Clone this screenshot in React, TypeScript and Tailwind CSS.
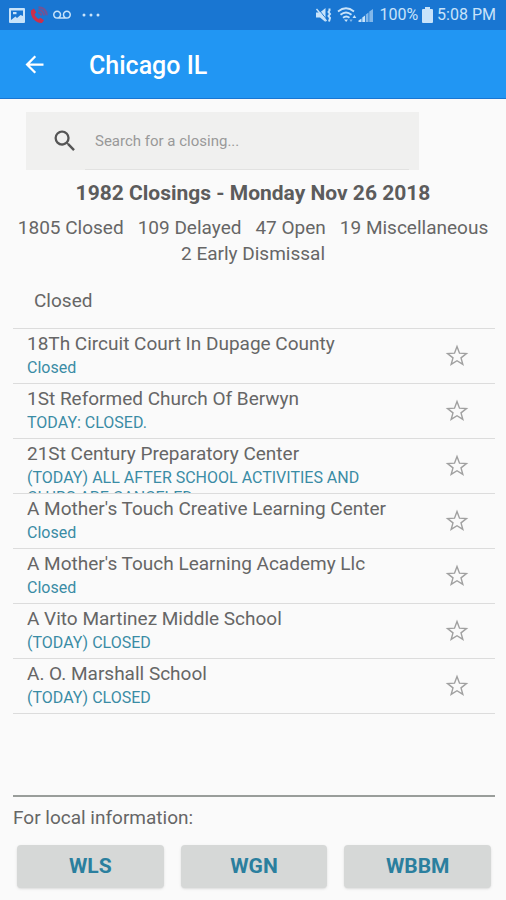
import React, { useState } from "react";
import { MdArrowBack, MdSearch, MdVoicemail } from "react-icons/md";

const closings = [
  { id: 1, name: "18Th Circuit Court In Dupage County", status: "Closed" },
  { id: 2, name: "1St Reformed Church Of Berwyn", status: "TODAY: CLOSED." },
  {
    id: 3,
    name: "21St Century Preparatory Center",
    status: "(TODAY) ALL AFTER SCHOOL ACTIVITIES AND CLUBS ARE CANCELED",
  },
  { id: 4, name: "A Mother's Touch Creative Learning Center", status: "Closed" },
  { id: 5, name: "A Mother's Touch Learning Academy Llc", status: "Closed" },
  { id: 6, name: "A Vito Martinez Middle School", status: "(TODAY) CLOSED" },
  { id: 7, name: "A. O. Marshall School", status: "(TODAY) CLOSED" },
];

const totals = ["1805 Closed", "109 Delayed", "47 Open", "19 Miscellaneous", "2 Early Dismissal"];

const stations = ["WLS", "WGN", "WBBM"];

const Star = () => (
  <svg width="26" height="26" viewBox="0 0 24 24" fill="none" stroke="#a0a0a0" strokeWidth="1.300">
    <path d="M12 3.200l2.300 6.200 6.400.3-5 4 1.700 6.100-5.400-3.400-5.400 3.400 1.700-6.100-5-4 6.400-.3z" />
  </svg>
);

const StatusBar = () => (
  <div className="flex items-center justify-between h-[30px] pl-[9px] pr-[10px] bg-[#1976d2] text-[#c8e3fa]">
    <div className="flex items-center">
      <svg width="16" height="15" viewBox="0 0 16 15">
        <rect width="16" height="15" rx="1" fill="currentColor" />
        <path d="M2 2.500h12v5.500l-2.500-1L8 10 6.500 8.500 2 12z" fill="#1976d2" />
        <path d="M4 4h3.500v2.200H4z" fill="currentColor" />
      </svg>
      <svg className="ml-[5px]" width="18" height="18" viewBox="0 0 18 18" fill="none">
        <path
          d="M1 4.500 4 2.500l2.200 4-1.700 1.800c.8 2 2 3.600 4 4.700l2-1.200 3.500 2.500-2 2.700C6 17.500 0 11.500 1 4.500z"
          fill="#cc2f4b"
        />
        <path
          d="M8 6.500c2 .3 3 1.300 3.300 3M8.500 3.800c3.500.4 5.300 2.300 5.700 5.700M8.500 1.200c5 .4 8 3.200 8.300 8"
          stroke="#6f5496"
          strokeWidth="2"
        />
      </svg>
      <MdVoicemail className="ml-[5px]" size={18} />
      <svg className="ml-[11px]" width="18" height="4" viewBox="0 0 18 4" fill="currentColor">
        <circle cx="2" cy="2" r="1.500" />
        <circle cx="9" cy="2" r="1.500" />
        <circle cx="16" cy="2" r="1.500" />
      </svg>
    </div>

    <div className="flex items-center">
      <svg width="18" height="16" viewBox="0 0 18 16" fill="none">
        <path d="M1 5.500h4L10.500 1v14L5 10.500H1z" fill="currentColor" />
        <path d="M3 1.500l9 11.500" stroke="#1976d2" strokeWidth="1" />
        <path d="M1.500 2l10 12" stroke="currentColor" strokeWidth="1.400" />
        <path d="M14.500 1.500v2L13.500 5l1.500 2-1.500 2 1.500 2-1 3.500" stroke="currentColor" strokeWidth="2" />
      </svg>
      <svg className="ml-1" width="20" height="16" viewBox="0 0 20 16" fill="none" stroke="currentColor">
        <path d="M1 4.500c5-4 11-4 16 0M3.500 7.800c3.500-3 7.500-3 11 0M6 10.800c2-1.600 4.500-1.600 6.500 0" strokeWidth="1.800" />
        <path d="M7 12.500h4L9.200 15z" fill="currentColor" stroke="none" />
        <path d="M12.300 12.500h3.400L14 15z" fill="currentColor" stroke="none" opacity="0.600" />
        <path d="M15.500 11h3.800l-1.900-3z" fill="currentColor" stroke="none" />
      </svg>
      <svg className="ml-px" width="16" height="16" viewBox="0 0 16 16" fill="currentColor">
        <path d="M.5 13.500l3-2V15h-3zM4.300 10.500l2.700-2V15H4.300z" />
        <path d="M7.800 7.500l2.700-2V15H7.800zM11.300 4.500L15 2v13h-3.700z" opacity="0.600" />
      </svg>
      <span className="ml-[5px] text-base">100%</span>
      <svg className="ml-1" width="11" height="16" viewBox="0 0 11 16" fill="currentColor">
        <path d="M3 0h5v2h2q1 0 1 1v12q0 1-1 1H1q-1 0-1-1V3q0-1 1-1h2z" />
      </svg>
      <span className="ml-1 text-base">5:08 PM</span>
    </div>
  </div>
);

const App = () => {
  const [query, setQuery] = useState("");

  return (
    <div className="flex flex-col min-h-screen bg-[#fafafa] text-[#666] font-['Roboto',sans-serif]">
      <StatusBar />

      <header className="flex items-center h-[69px] px-[21px] bg-[#2196f3] text-white border-b border-[#1976d2]">
        <button type="button" aria-label="Back">
          <MdArrowBack size={27} />
        </button>
        <h1 className="ml-[41px] pt-1 text-[25px] leading-[30px] font-medium">Chicago IL</h1>
      </header>

      <main className="flex flex-col grow">
        <label className="flex items-center w-[393px] max-w-[90%] h-[58px] ml-[26px] mt-[13px] pl-[25px] pr-[10px] bg-[#f0f0ef]">
          <MdSearch size={28} color="#555" />
          <input
            type="text"
            aria-label="Search for a closing"
            placeholder="Search for a closing..."
            value={query}
            onChange={(e) => setQuery(e.target.value)}
            className="grow min-w-0 h-full ml-[6px] pl-[10px] text-[15px] border-b border-[#e2e2e1] outline-none placeholder:text-[#999]"
          />
        </label>

        <h2 className="mt-2 text-center text-[21px] leading-[30px] font-bold text-[#5c5c5c]">
          1982 Closings - Monday Nov 26 2018
        </h2>
        <ul className="flex flex-wrap justify-center gap-x-[14px] mt-[7px] text-[19px] leading-[26px]">
          {totals.map((total) => (
            <li key={total}>{total}</li>
          ))}
        </ul>

        <section className="ml-[13px] mr-[11px] mt-[18px]">
          <h3 className="pl-[21px] pt-px pb-3 text-[19px] leading-[30px]">Closed</h3>
          <ul className="border-t border-[#dcdcdc]">
            {closings.map(({ id, name, status }) => (
              <li key={id} className="flex items-center h-[55px] pl-[14px] pr-[25px] border-b border-[#dcdcdc]">
                <div className="grow h-full pt-[2px] overflow-hidden">
                  <p className="text-[19px] leading-[26px]">{name}</p>
                  <p className="w-[360px] mt-px text-base leading-5 text-[#3a8ca5]">{status}</p>
                </div>
                <button type="button" aria-label={`Add ${name} to favorites`}>
                  <Star />
                </button>
              </li>
            ))}
          </ul>
        </section>

        <footer className="ml-[13px] mr-[11px] mt-auto pb-3 border-t-2 border-[#999d9a]">
          <p className="pt-2 text-[19px] leading-[26px]">For local information:</p>
          <div className="grid grid-cols-3 gap-[17px] mt-[14px] px-1">
            {stations.map((station) => (
              <button
                key={station}
                type="button"
                className="h-[43px] rounded-sm bg-[#d6d8d7] text-[21px] font-bold text-[#2b7f9e] shadow"
              >
                {station}
              </button>
            ))}
          </div>
        </footer>
      </main>
    </div>
  );
};

export default App;
